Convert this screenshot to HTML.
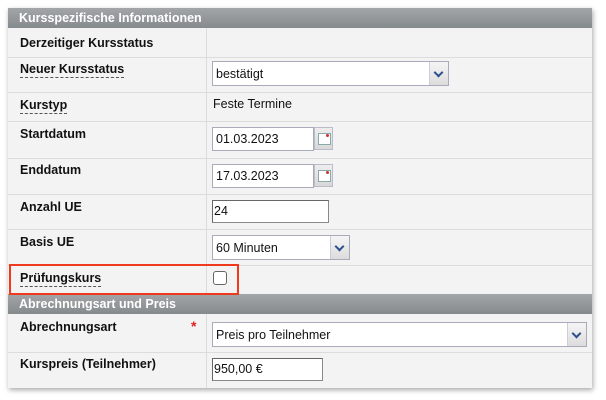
<!DOCTYPE html><html><head><style>
body{margin:0;width:606px;height:400px;background:#fff;font-family:"Liberation Sans",Arial,sans-serif;position:relative;overflow:hidden}
.p{position:absolute;left:8px;top:8px;width:584px;height:380px;background:#f3f3f3;box-shadow:1px 2px 5px rgba(0,0,0,.35)}
.a{position:absolute}
.h{position:absolute;left:8px;width:584px;height:20px;background:linear-gradient(#a3a6a8,#858a8d);color:#fff;font-weight:bold;font-size:12.5px;line-height:20px;text-indent:11px}
.l{position:absolute;left:8px;width:584px;height:1px;background:#dcdcdc}
.lb{position:absolute;left:20px;font-weight:bold;font-size:12.5px;color:#111}
.u{border-bottom:1px dashed #555;padding-bottom:1px}
.in{position:absolute;background:#fff;border:1px solid #aab;box-sizing:border-box;font-size:12.5px;line-height:22px;padding-left:3px;color:#111}
.in2{border:1px solid #888;border-top-color:#666;border-left-color:#666;padding-left:1px;line-height:20px}
.btn{position:absolute;top:0;right:0;bottom:0;width:18px;border-left:1px solid #ccd;background:linear-gradient(#f5f5f5,#dcdcdc)}
.btn:after{content:"";position:absolute;left:5px;top:7px;width:5px;height:5px;border-right:2px solid #2d4f8f;border-bottom:2px solid #2d4f8f;transform:rotate(45deg)}
.cal{position:absolute;width:19px;height:23px;background:linear-gradient(#eee,#d8d8d8);border:1px solid #bbc;box-sizing:border-box}
.cal i{position:absolute;left:3px;top:5px;width:11px;height:10px;border:1px solid #8aa;background:#fff}
.cal b{position:absolute;right:3px;top:6px;width:3px;height:3px;border-radius:50%;background:#c33}
</style></head><body>
<div class="p"></div>
<div class="a" style="left:206px;top:8px;width:1px;height:380px;background:#dcdcdc"></div>
<div class="h" style="top:8px">Kursspezifische Informationen</div>
<div class="l" style="top:57px"></div><div class="l" style="top:92px"></div><div class="l" style="top:121px"></div><div class="l" style="top:158px"></div><div class="l" style="top:194px"></div><div class="l" style="top:229px"></div><div class="l" style="top:265px"></div><div class="l" style="top:352px"></div>
<div class="h" style="top:294px">Abrechnungsart und Preis</div>
<div class="lb" style="top:36px">Derzeitiger Kursstatus</div>
<div class="lb" style="top:62px"><span class="u">Neuer Kursstatus</span></div>
<div class="lb" style="top:98px"><span class="u">Kurstyp</span></div>
<div class="lb" style="top:127px">Startdatum</div>
<div class="lb" style="top:163px">Enddatum</div>
<div class="lb" style="top:200px">Anzahl UE</div>
<div class="lb" style="top:235px">Basis UE</div>
<div class="lb" style="top:271px"><span class="u">Prüfungskurs</span></div>
<div class="lb" style="top:320px">Abrechnungsart</div>
<div class="a" style="left:191px;top:318px;color:#e02020;font-weight:bold;font-size:14px">*</div>
<div class="lb" style="top:357px">Kurspreis (Teilnehmer)</div>
<div class="in" style="left:212px;top:61px;width:237px;height:25px;line-height:24px">bestätigt<div class="btn"></div></div>
<div class="a" style="left:213px;top:97px;font-size:12.5px;color:#111">Feste Termine</div>
<div class="in" style="left:212px;top:127px;width:102px;height:24px">01.03.2023</div>
<div class="cal" style="left:314px;top:127px"><i></i><b></b></div>
<div class="in" style="left:212px;top:164px;width:102px;height:24px">17.03.2023</div>
<div class="cal" style="left:314px;top:164px"><i></i><b></b></div>
<div class="in in2" style="left:212px;top:200px;width:117px;height:23px">24</div>
<div class="in" style="left:212px;top:235px;width:138px;height:25px;line-height:24px">60 Minuten<div class="btn"></div></div>
<div class="a" style="left:213px;top:271px;width:12px;height:12px;border:1px solid #666;border-radius:3px;background:#fff"></div>
<div class="a" style="left:9px;top:264px;width:226px;height:27px;border:2px solid #f03a1e"></div>
<div class="in" style="left:212px;top:322px;width:375px;height:25px;line-height:24px">Preis pro Teilnehmer<div class="btn"></div></div>
<div class="in in2" style="left:212px;top:358px;width:111px;height:23px">950,00 €</div>
</body></html>
